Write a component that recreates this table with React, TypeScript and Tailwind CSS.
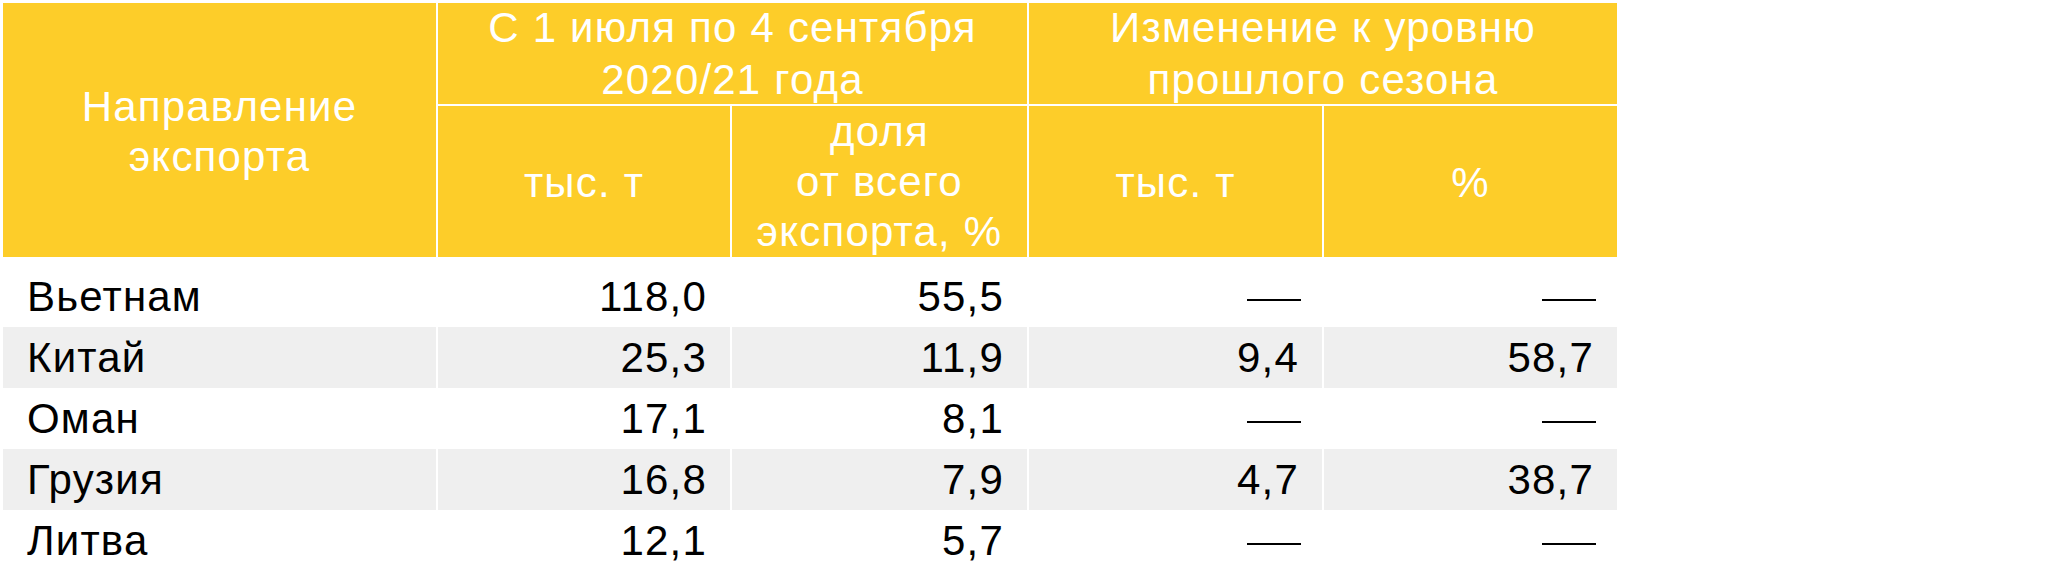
import React from "react";

const rows: { name: string; v: (string | null)[] }[] = [
  { name: "Вьетнам", v: ["118,0", "55,5", null, null] },
  { name: "Китай", v: ["25,3", "11,9", "9,4", "58,7"] },
  { name: "Оман", v: ["17,1", "8,1", null, null] },
  { name: "Грузия", v: ["16,8", "7,9", "4,7", "38,7"] },
  { name: "Литва", v: ["12,1", "5,7", null, null] },
];

export default function App() {
  return (
    <div
      className="w-[2056px] h-[573px] bg-white overflow-hidden pl-[3px] pt-[3px]"
      style={{ fontFamily: '"Liberation Sans", Arial, sans-serif' }}
    >
      <div className="w-[1614px]">
        <div className="grid grid-cols-[433px_292px_295px_293px_293px] grid-rows-[101px_151px] gap-[2px] text-[42px] tracking-[1.2px] text-white">
          <div className="row-span-2 bg-[#fdcd29] flex items-center justify-center text-center leading-[50px] pt-[4px]">
            <div>
              Направление
              <br />
              экспорта
            </div>
          </div>
          <div className="col-span-2 bg-[#fdcd29] flex items-center justify-center text-center leading-[52px]">
            <div>
              С 1 июля по 4 сентября
              <br />
              2020/21 года
            </div>
          </div>
          <div className="col-span-2 bg-[#fdcd29] flex items-center justify-center text-center leading-[52px]">
            <div>
              Изменение к уровню
              <br />
              прошлого сезона
            </div>
          </div>
          <div className="bg-[#fdcd29] flex items-center justify-center text-center leading-[50px] pt-[2px]">
            тыс. т
          </div>
          <div className="bg-[#fdcd29] flex items-center justify-center text-center leading-[50px]">
            <div>
              доля
              <br />
              от всего
              <br />
              экспорта, %
            </div>
          </div>
          <div className="bg-[#fdcd29] flex items-center justify-center text-center leading-[50px] pt-[2px]">
            тыс. т
          </div>
          <div className="bg-[#fdcd29] flex items-center justify-center text-center leading-[50px] pt-[2px]">
            %
          </div>
        </div>

        <div className="mt-[9px] flex flex-col text-[42px] tracking-[1.2px] leading-[61px] text-black">
          {rows.map((r, i) => {
            const bg = i % 2 === 1 ? "bg-[#efefef]" : "bg-white";
            return (
              <div
                key={r.name}
                className="grid grid-cols-[433px_292px_295px_293px_293px] gap-x-[2px] h-[61px]"
              >
                <div className={`${bg} pl-[24px]`}>{r.name}</div>
                {r.v.map((val, j) => (
                  <div key={j} className={`${bg} text-right ${val ? "pr-[23px]" : "pr-[22px]"}`}>
                    {val ?? (
                      <span className="inline-block w-[54px] h-[2px] bg-black mb-[10px] -mr-[1.2px]" />
                    )}
                  </div>
                ))}
              </div>
            );
          })}
        </div>
      </div>
    </div>
  );
}
